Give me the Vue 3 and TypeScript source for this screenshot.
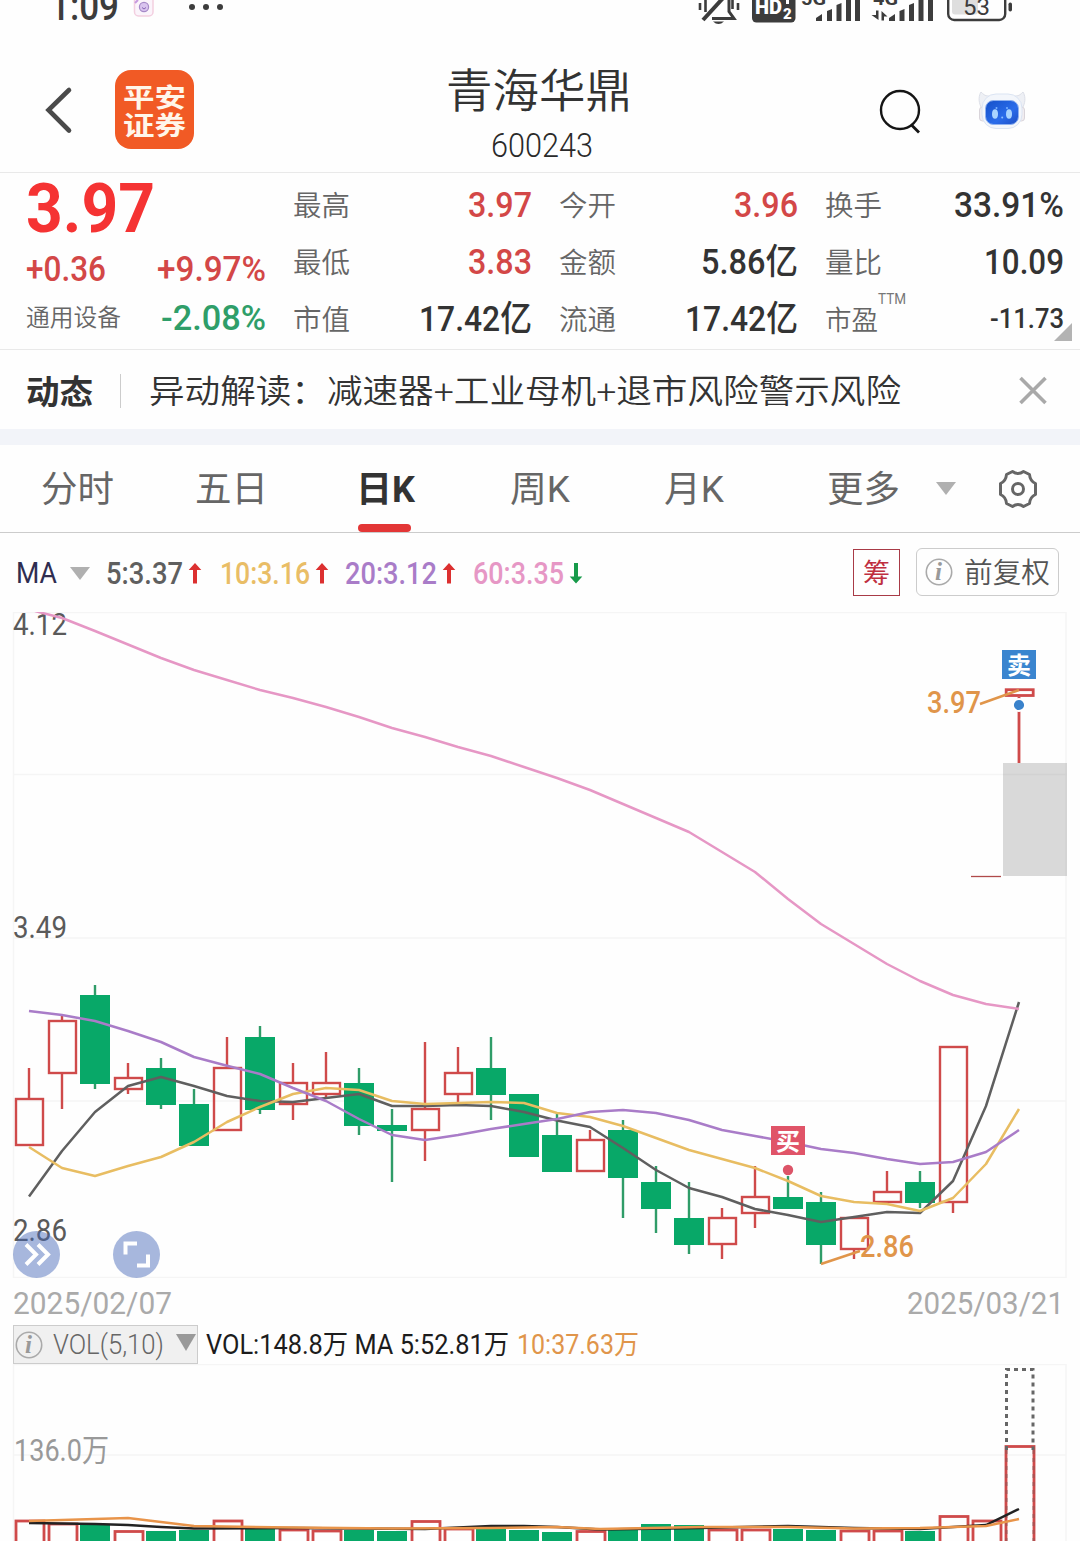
<script setup lang="ts">
import { h } from 'vue'

interface FitProps {
  t: string
  w: number
  s: number
  gap?: boolean
}

// One line of text stretched to a fixed width, vertically centred on its glyphs.
const Fit = (p: FitProps) =>
  h('svg', { class: 'fit', width: p.w, height: p.s }, [
    h('text', {
      x: 0,
      y: p.s * (/[0-9A-Z]/.test(p.t) && !/[日周月]/.test(p.t) ? 0.835 : 0.893),
      'font-size': p.s,
      fill: 'currentColor',
      textLength: p.w,
      lengthAdjust: p.gap ? 'spacing' : 'spacingAndGlyphs',
    }, p.t),
  ])
Fit.props = ['t', 'w', 's', 'gap']

interface Stat { label: string; value: string; w: number; red?: boolean; small?: boolean }
const columns: Stat[][] = [
  [
    { label: '最高', value: '3.97', w: 64, red: true },
    { label: '最低', value: '3.83', w: 64, red: true },
    { label: '市值', value: '17.42亿', w: 113 },
  ],
  [
    { label: '今开', value: '3.96', w: 64, red: true },
    { label: '金额', value: '5.86亿', w: 97 },
    { label: '流通', value: '17.42亿', w: 113 },
  ],
  [
    { label: '换手', value: '33.91%', w: 110 },
    { label: '量比', value: '10.09', w: 80 },
    { label: '市盈', value: '-11.73', w: 74, small: true },
  ],
]

const tabs = [
  { t: '分时', w: 73, box: 154 },
  { t: '五日', w: 73, box: 154 },
  { t: '日K', w: 59, box: 155, on: true },
  { t: '周K', w: 60, box: 154 },
  { t: '月K', w: 60, box: 154 },
]

const averages = [
  { t: '5:3.37', w: 77, color: '#5f5f5f', up: true, gap: 18 },
  { t: '10:3.16', w: 90, color: '#e9bd66', up: true, gap: 16 },
  { t: '20:3.12', w: 92, color: '#a97cc8', up: true, gap: 17 },
  { t: '60:3.35', w: 91, color: '#e697c5', up: false, gap: 0 },
]

// up, body top, body bottom, high, low
type Candle = [boolean, number, number, number, number]
const R = true
const G = false
const candles: Candle[] = [
  [R, 1098, 1146, 1068, 1146], [R, 1020, 1074, 1016, 1109], [G, 995, 1084, 985, 1089],
  [R, 1077, 1090, 1063, 1094], [G, 1068, 1105, 1058, 1109], [G, 1104, 1146, 1089, 1146],
  [R, 1067, 1131, 1037, 1131], [G, 1037, 1110, 1026, 1114], [R, 1082, 1105, 1063, 1120],
  [R, 1082, 1095, 1052, 1097], [G, 1083, 1126, 1068, 1135], [G, 1125, 1131, 1109, 1182],
  [R, 1108, 1131, 1042, 1161], [R, 1072, 1095, 1047, 1102], [G, 1068, 1095, 1037, 1120],
  [G, 1094, 1157, 1094, 1157], [G, 1135, 1172, 1114, 1172], [R, 1139, 1172, 1130, 1172],
  [G, 1130, 1178, 1120, 1218], [G, 1182, 1209, 1166, 1233], [G, 1218, 1245, 1182, 1254],
  [R, 1217, 1245, 1208, 1259], [R, 1196, 1214, 1166, 1228], [G, 1197, 1209, 1176, 1209],
  [G, 1202, 1245, 1192, 1264], [R, 1217, 1250, 1217, 1259], [R, 1191, 1203, 1171, 1203],
  [G, 1182, 1203, 1171, 1208], [R, 1046, 1203, 1046, 1213],
]
const cx = (i: number) => 29 + 33 * i
const line = (ys: number[], from = 0) => ys.map((y, i) => `${cx(i + from)},${y}`).join(' ')

const ma5 = line([1196.5, 1151, 1112, 1086, 1077, 1086, 1096, 1101, 1102, 1098, 1094, 1106, 1106, 1105, 1106, 1112, 1120.5, 1127, 1148, 1170, 1188, 1197, 1209, 1215, 1222, 1217, 1212, 1213, 1181, 1106, 1002])
const ma10 = line([1147, 1168, 1176, 1166, 1157, 1142, 1122, 1107, 1094, 1088, 1090, 1101, 1104, 1103, 1102, 1103, 1113, 1117, 1126, 1138, 1150, 1159, 1168, 1181, 1196, 1202, 1204, 1211, 1198, 1164, 1109])
const ma20 = line([1011, 1015, 1021, 1031, 1042, 1057, 1065.7, 1074, 1088, 1101, 1119, 1135, 1140, 1135, 1129, 1124, 1119, 1112, 1110, 1113, 1120, 1130, 1136, 1142, 1149, 1153, 1159, 1164, 1162, 1152, 1130])
const ma60 = '35,611 ' + line([618, 631, 644.5, 658, 670, 680, 690, 698, 707, 717, 728, 737, 747, 756, 767, 778, 790, 804, 818, 832, 852, 872, 899, 924, 944, 964, 981, 995, 1004, 1009], 1)

const volumes: [boolean, number][] = [
  [R, 1520], [R, 1523], [G, 1525], [R, 1530.5], [G, 1531], [G, 1530], [R, 1520], [G, 1528],
  [R, 1529], [R, 1530], [G, 1530], [G, 1531], [R, 1520.5], [R, 1528], [G, 1528], [G, 1530],
  [G, 1532], [R, 1530.5], [G, 1530], [G, 1524], [G, 1525], [R, 1529], [R, 1529], [G, 1529],
  [G, 1530], [R, 1530], [R, 1530], [G, 1531], [R, 1515.5], [R, 1520], [R, 1445.5],
]
const vol5 = '29,1523 95,1524 128,1525 161,1527 194,1528.5 293,1528 425,1529 491,1526 524,1526 557,1527 600,1529.5 700,1528 788,1526 854,1528 920,1529 953,1527 986,1525 1019,1509'
const vol10 = '29,1521 128,1518 194,1526 293,1527.5 392,1528.5 491,1528 557,1527 600,1529 700,1527 788,1527 854,1528.5 920,1528 953,1527 986,1526 1019,1519'
</script>

<template>
  <main class="page">
    <header class="status">
      <svg class="status-left" width="240" height="30" viewBox="0 0 240 30">
        <text x="50" y="20" font-size="40" font-weight="500" fill="#3c3c3c" textLength="69" lengthAdjust="spacingAndGlyphs">1:09</text>
        <rect x="134.500" y="-8" width="18.500" height="24" rx="4" fill="#fbf4fb" stroke="#f3cfe0" stroke-width="1.500" />
        <circle cx="144" cy="7" r="4.600" fill="#d9c3ee" stroke="#a78ac8" stroke-width="1.200" />
        <path d="M142 7.500q2 3 4 0" fill="none" stroke="#8763b4" />
        <path d="M135 3l3-3" stroke="#c79adf" stroke-width="2" />
        <g fill="#3c3c3c"><circle cx="192" cy="7" r="3" /><circle cx="206" cy="7" r="3" /><circle cx="220" cy="7" r="3" /></g>
      </svg>
      <svg width="390" height="30" viewBox="690 0 390 30" fill="#3c3c3c">
        <g fill="none" stroke="#3c3c3c" stroke-width="3">
          <path d="M700 3v7M705.500 0v12M738 3v7M732.500 0v9" stroke-width="2.600" />
          <path d="M703 20L724 -3" stroke-width="4" />
          <path d="M712 18.500h22l-5-7V-2" />
        </g>
        <path d="M713 21.500h11q-5.500 5-11 0z" />
        <rect x="752" y="-10" width="43.500" height="32.500" rx="4.500" />
        <text x="755" y="13.500" font-size="20" font-weight="900" fill="#fff" textLength="27" lengthAdjust="spacingAndGlyphs">HD</text>
        <text x="783" y="18.500" font-size="15" font-weight="900" fill="#fff">2</text>
        <path d="M786 0h3v4h-3z" fill="#fff" />
        <text x="801" y="5" font-size="18" font-weight="700" textLength="25" lengthAdjust="spacingAndGlyphs">5G</text>
        <path d="M816 21v-3l6-4v7zM827 21V11l5-2v12zM836.500 21V5l5-2v18zM846 21V0h5v21zM855 21V0h5v21z" />
        <text x="873" y="5" font-size="18" font-weight="700" textLength="25" lengthAdjust="spacingAndGlyphs">4G</text>
        <path d="M876 10.500h2.500v9.500l-7-5h4.500zM881.500 20.500v-9.500l6 5.500h-3.500v4z" />
        <path d="M889 21v-3l6-4v7zM899.500 21V11l5-2v12zM909 21V5l5-2v18zM918.500 21V0h5v21zM928 21V0h5v21z" />
        <rect x="952" y="-8" width="26" height="22.500" rx="3" fill="#dedede" />
        <rect x="948.200" y="-12" width="57" height="32" rx="6" fill="none" stroke="#3c3c3c" stroke-width="2.400" />
        <rect x="1008.500" y="2.500" width="3.500" height="9" rx="1.700" />
        <text x="963" y="15" font-size="23" textLength="27" lengthAdjust="spacingAndGlyphs">53</text>
      </svg>
    </header>

    <nav class="titlebar">
      <svg class="back" width="34" height="52" viewBox="42 84 34 52"><path d="M69 90L48.500 110L69 130.500" fill="none" stroke="#4a4a4a" stroke-width="4.600" stroke-linecap="round" /></svg>
      <div class="logo">
        <Fit t="平安" :w="63" :s="26.500" /><Fit t="证券" :w="63" :s="26.500" />
      </div>
      <div class="name">
        <Fit class="stock" t="青海华鼎" :w="186" :s="46" />
        <Fit class="code" t="600243" :w="102" :s="32.500" />
      </div>
      <svg class="search" width="44" height="46" viewBox="878 88 44 46"><circle cx="900" cy="110" r="19" fill="none" stroke="#151515" stroke-width="2.400" /><path d="M911.500 125l7.500 7.500" stroke="#151515" stroke-width="2.800" /></svg>
      <svg class="robot" width="48" height="42" viewBox="978 89 48 42">
        <defs>
          <linearGradient id="face" x1="0" y1="0" x2="1" y2="1"><stop offset="0" stop-color="#1550c8" /><stop offset=".6" stop-color="#2a6cea" /><stop offset="1" stop-color="#1c4ec4" /></linearGradient>
        </defs>
        <path d="M981 107c-3-6-2-12 0-15 2 2 4 4 7 4h28c3 0 5-2 7-4 2 3 3 9 0 15" fill="#eef0f5" stroke="#dcdfe8" />
        <rect x="979.500" y="107" width="7" height="14" rx="3" fill="#f0edf0" stroke="#d9d4da" />
        <rect x="1017.500" y="107" width="7" height="14" rx="3" fill="#f0edf0" stroke="#d9d4da" />
        <rect x="982" y="94" width="40" height="34.500" rx="14" fill="#f3f6fb" stroke="#dbe4f3" />
        <rect x="985.500" y="100.500" width="33" height="24" rx="8" fill="url(#face)" stroke="#8fb2f0" />
        <ellipse cx="995" cy="114" rx="3" ry="4.700" fill="#a9d4ff" /><ellipse cx="1009" cy="114" rx="3" ry="4.700" fill="#a9d4ff" />
        <circle cx="996.500" cy="108" r="1" fill="#7db4ff" /><circle cx="1007" cy="108" r="1" fill="#7db4ff" /><circle cx="1002.200" cy="117.500" r="1" fill="#8fc0ff" />
      </svg>
    </nav>

    <section class="quote">
      <div class="price">
        <Fit class="last" t="3.97" :w="129" :s="69" />
        <div class="pair red change"><Fit t="+0.36" :w="80" :s="35" /><Fit t="+9.97%" :w="109" :s="35" /></div>
        <div class="pair"><Fit class="sector" t="通用设备" :w="95" :s="24" /><Fit class="green" t="-2.08%" :w="105" :s="35" /></div>
      </div>
      <div v-for="(col, c) in columns" :key="c" class="col">
        <div v-for="s in col" :key="s.label" class="stat">
          <Fit class="label" :t="s.label" :w="s.small ? 53 : 57" :s="s.small ? 27 : 28.500" />
          <Fit v-if="s.small" class="ttm" t="TTM" :w="28" :s="15.500" />
          <Fit class="val" :class="{ red: s.red }" :t="s.value" :w="s.w" :s="s.small ? 28 : 35" />
        </div>
      </div>
      <i class="corner"></i>
    </section>

    <section class="news">
      <Fit class="news-tag" t="动态" :w="67" :s="33.500" />
      <i class="bar"></i>
      <Fit class="news-text" t="异动解读：减速器+工业母机+退市风险警示风险" :w="752" :s="33" gap />
      <svg class="close" width="28" height="30" viewBox="0 0 28 30"><path d="M1.500 2l25 25M26.500 2l-25 25" stroke="#a9a9a9" stroke-width="3.600" /></svg>
    </section>

    <section class="tabs">
      <div v-for="tab in tabs" :key="tab.t" class="tab" :class="{ on: tab.on }" :style="{ width: tab.box + 'px' }">
        <Fit :t="tab.t" :w="tab.w" :s="36.500" />
      </div>
      <Fit class="more" t="更多" :w="73" :s="36.500" />
      <i class="tri"></i>
      <svg class="gear" width="40" height="40" viewBox="-20 -20 40 40" fill="none" stroke="#666" stroke-width="3" stroke-linejoin="round">
        <path d="M-5.500-17.500Q0-13.500 5.500-17.500L11.500-14.500Q12-8 17.500-5.500V5.500Q12 8 11.500 14.500L5.500 17.500Q0 13.500-5.500 17.500L-11.500 14.500Q-12 8-17.500 5.500V-5.500Q-12-8-11.500-14.500Z" />
        <circle r="5.500" />
      </svg>
    </section>

    <section class="averages">
      <Fit class="ma" t="MA" :w="41" :s="29" />
      <i class="tri ma-tri"></i>
      <div v-for="a in averages" :key="a.t" class="avg" :style="{ color: a.color, marginRight: a.gap + 'px' }">
        <Fit :t="a.t" :w="a.w" :s="31" />
        <svg width="14" height="22" viewBox="0 0 14 22">
          <path v-if="a.up" d="M7 1L13.300 8H9V21.500H5V8H.7z" fill="#dc3030" />
          <path v-else d="M7 21.500L13.300 14.500H9V1H5V14.500H.7z" fill="#179a4a" />
        </svg>
      </div>
      <span class="chip"><Fit t="筹" :w="27" :s="27" /></span>
      <span class="adjust">
        <svg width="28" height="28" viewBox="-14 -14 28 28"><circle r="12.700" fill="none" stroke="#aaa" stroke-width="1.600" /><text class="info" y="8" x="-.5" text-anchor="middle">i</text></svg>
        <Fit t="前复权" :w="86" :s="28.500" />
      </span>
    </section>

    <svg class="chart" width="1080" height="666" viewBox="0 612 1080 666">
      <g class="grid"><path d="M13.500 1277.500V612.500H1066V1277.500zM14 774.500H1066M14 938H1066M14 1101H1066" /></g>
      <g class="axis" font-size="31">
        <text x="13" y="635" textLength="54" lengthAdjust="spacingAndGlyphs">4.12</text>
        <text x="13" y="938" textLength="54" lengthAdjust="spacingAndGlyphs">3.49</text>
        <text x="13" y="1241" textLength="54" lengthAdjust="spacingAndGlyphs">2.86</text>
      </g>
      <g v-for="(k, i) in candles" :key="i" :class="k[0] ? 'up' : 'down'">
        <path :d="`M${cx(i)} ${k[3]}V${k[1]}M${cx(i)} ${k[2]}V${k[4]}`" />
        <rect v-if="k[0]" :x="cx(i) - 13" :y="k[1] + 1" width="27" :height="k[2] - k[1] - 2" />
        <rect v-else :x="cx(i) - 15" :y="k[1]" width="30" :height="k[2] - k[1]" />
      </g>
      <path d="M971 876.500h30" stroke="#b04a4a" stroke-width="1.300" />
      <g class="up last-candle"><rect x="1006.200" y="689.700" width="27" height="5.800" /><path d="M1019 697v66" /></g>
      <g class="curves">
        <polyline :points="ma5" stroke="#5f5f5f" />
        <polyline :points="ma10" stroke="#e8bd62" />
        <polyline :points="ma20" stroke="#a97cc8" />
        <polyline :points="ma60" stroke="#e697c5" />
        <path d="M980 704L1019 690M821 1264L860 1251" stroke="#e0954a" />
      </g>
      <rect x="1003" y="763" width="64" height="113" fill="#d9d9d9" />
      <path d="M1003 774.500h64M1066 763v113" stroke="#d2d2d2" stroke-width="1.500" />
      <circle cx="1019" cy="705" r="6" fill="#3a82cb" stroke="#fff" stroke-width="1.800" />
      <circle cx="788" cy="1170" r="5.200" fill="#dc5468" />
      <g fill="#e0954a" font-size="30.500" font-weight="500">
        <text x="927" y="713" textLength="54" lengthAdjust="spacingAndGlyphs">3.97</text>
        <text x="860" y="1257" textLength="54" lengthAdjust="spacingAndGlyphs">2.86</text>
      </g>
      <rect x="1002" y="650" width="34" height="29" fill="#3a85cf" />
      <text class="mark" x="1019" y="673.500">卖</text>
      <rect x="771" y="1126" width="34" height="29" fill="#e05468" />
      <text class="mark" x="788" y="1149.500">买</text>
      <g fill="rgba(70,105,185,.47)"><circle cx="36.500" cy="1254.500" r="23.500" /><circle cx="136.500" cy="1254.500" r="23.500" /></g>
      <path d="M26 1244.500L36 1254.500L26 1264.500M38 1244.500L48 1254.500L38 1264.500M137 1243.500H125.500V1254.500M137 1265.500H148V1254.500" fill="none" stroke="#fff" stroke-width="4" />
    </svg>

    <div class="dates"><Fit t="2025/02/07" :w="159" :s="31.500" /><Fit t="2025/03/21" :w="157" :s="31.500" /></div>

    <section class="volbar">
      <div class="volpick">
        <svg width="28" height="28" viewBox="-14 -14 28 28"><circle r="12.700" fill="none" stroke="#aaa" stroke-width="1.600" /><text class="info" y="8" x="-.5" text-anchor="middle">i</text></svg>
        <Fit class="volname" t="VOL(5,10)" :w="111" :s="27.500" />
        <i class="tri vol-tri"></i>
      </div>
      <Fit class="voltext" t="VOL:148.8万 MA 5:52.81万" :w="303" :s="27" />
      <Fit class="voltext orange" t="10:37.63万" :w="122" :s="27" />
    </section>

    <svg class="chart" width="1080" height="177" viewBox="0 1364 1080 177">
      <g class="grid"><path d="M13.500 1545V1364.500H1066V1545M14 1455H1066" /></g>
      <text x="14" y="1461" font-size="31" fill="#999" textLength="95" lengthAdjust="spacingAndGlyphs">136.0万</text>
      <g v-for="(v, i) in volumes" :key="i" :class="v[0] ? 'up' : 'down'">
        <rect v-if="v[0]" :x="cx(i) - 13" :y="v[1] + 1" width="28" height="110" class="vol" />
        <rect v-else :x="cx(i) - 15" :y="v[1]" width="30" height="110" />
      </g>
      <path d="M1006.500 1450V1369.500H1033V1450" fill="none" stroke="#666" stroke-width="3" stroke-dasharray="4 4" />
      <path d="M1006.500 1450V1545M1033.500 1450V1545" fill="none" stroke="#8a5a5a" stroke-width="2.400" stroke-dasharray="4 4" stroke-opacity=".5" />
      <g class="curves"><polyline :points="vol5" stroke="#222" /><polyline :points="vol10" stroke="#e8944a" /></g>
    </svg>
  </main>
</template>

<style>
body { background: #fefefe; }
</style>

<style scoped>
.page { width: 1080px; height: 1541px; overflow: hidden; background: #fefefe; font-family: Roboto, "Noto Sans CJK SC", sans-serif; color: #333; }
.fit { display: block; flex: none; overflow: visible; }
svg { display: block; flex: none; }
.status { display: flex; justify-content: space-between; height: 30px; overflow: hidden; }
.titlebar { display: flex; height: 143px; box-sizing: border-box; border-bottom: 1px solid #e9e9e9; align-items: flex-start; }
.back { margin: 54px 0 0 42px; }
.logo { box-sizing: border-box; width: 79px; height: 79px; margin: 40px 0 0 39px; padding: 13px 8px 0; border-radius: 16px; background: #f15a25; color: #fff6ea; font-weight: 700; display: flex; flex-direction: column; gap: 1px; }
.name { display: flex; flex-direction: column; align-items: center; margin-left: 251px; width: 188px; }
.stock { margin-top: 35.500px; font-weight: 350; }
.code { margin: 18px 0 0 6px; font-weight: 350; color: #2a2a2a; }
.search { margin: 58px 0 0 245px; }
.robot { margin: 59px 0 0 56px; }
.quote { position: relative; display: flex; height: 177px; box-sizing: border-box; border-bottom: 1px solid #e9e9e9; font-weight: 500; padding-right: 15px; }
.price { width: 240px; margin: 1px 27px 0 26px; }
.last { color: #f53333; font-weight: 700; margin-bottom: 9px; }
.pair { display: flex; justify-content: space-between; align-items: center; height: 35px; }
.pair + .pair { margin-top: 14px; }
.red { color: #d34747; }
.green { color: #2f9e69; }
.sector { color: #666; font-weight: 350; margin-bottom: 3px; }
.col { width: 239px; margin-right: 27px; padding-top: 3.500px; }
.col:nth-of-type(4) { margin-right: 0; }
.stat { display: flex; align-items: center; height: 57px; }
.label { color: #666; font-weight: 350; }
.ttm { color: #777; font-weight: 400; margin-top: -41px; }
.val { margin-left: auto; }
.corner { position: absolute; right: 8px; bottom: 8px; border-style: solid; border-width: 0 0 18px 18px; border-color: transparent transparent #b3b3b3; }
.news { display: flex; align-items: center; height: 79px; padding: 2px 0 0 26px; box-sizing: border-box; }
.news-tag { font-weight: 700; }
.bar { width: 1px; height: 34px; background: #ccc; margin: 0 28px 0 27px; }
.news-text { font-weight: 350; }
.close { margin-left: 118px; }
.tabs { border-top: 16px solid #f2f4f9; height: 87px; border-bottom: 1px solid #ccc; display: flex; align-items: stretch; color: #666; font-weight: 400; }
.tab { display: flex; justify-content: center; align-items: center; position: relative; padding-bottom: 2px; box-sizing: border-box; }
.tab.on { color: #333; font-weight: 700; }
.tab.on::after { content: ""; position: absolute; bottom: 0; left: 50px; width: 53px; height: 8px; border-radius: 4px; background: #e33636; }
.more { margin: 24px 0 0 56px; }
.tri { width: 0; height: 0; border: 10px solid transparent; border-bottom: 0; border-top: 13px solid #b0b0b0; flex: none; }
.tabs .tri { margin: 37px 0 0 36px; }
.gear { margin: 23.500px 0 0 42px; }
.averages { display: flex; align-items: center; height: 78px; padding: 2px 0 0 16px; box-sizing: border-box; }
.ma { color: #2f2d50; font-weight: 400; }
.ma-tri { margin: 0 16px 0 13px; }
.avg { display: flex; align-items: center; gap: 5px; font-weight: 500; }
.chip { box-sizing: border-box; width: 47px; height: 47px; border: 1.500px solid #a83a46; color: #bf2f40; display: flex; align-items: center; justify-content: center; margin: 0 16px 2px auto; }
.adjust { box-sizing: border-box; width: 143px; height: 48px; border: 1.500px solid #ccc; border-radius: 6px; display: flex; align-items: center; justify-content: space-between; padding: 0 8px 0 8px; margin: 0 21px 2px 0; color: #555; font-weight: 350; }
.info { font: italic 700 25px "Liberation Serif", serif; fill: #999; }
.chart { overflow: hidden; }
.averages + .chart { margin-top: 1px; }
.grid path { fill: none; stroke: #f5f5f5; stroke-width: 1.500; }
.axis { fill: #5a5a5a; }
.up { fill: none; stroke: #cf4a4a; stroke-width: 2.400; }
.last-candle { stroke-width: 2.800; }
.up .vol { stroke-width: 2.800; }
.down { fill: #08a868; stroke: none; }
.down path { stroke: #2f9c68; stroke-width: 2.400; }
.curves { fill: none; stroke-width: 2.500; stroke-linejoin: round; }
.mark { fill: #fff; font-size: 24px; font-weight: 700; text-anchor: middle; }
.dates { display: flex; justify-content: space-between; align-items: center; height: 47px; padding: 4px 16px 0 13px; box-sizing: border-box; color: #aaa; }
.volbar { display: flex; align-items: center; height: 39px; padding-left: 13px; }
.volpick { box-sizing: border-box; width: 185px; height: 39px; border: 1px solid #ccc; background: #f0f0f0; display: flex; align-items: center; padding-left: 1px; margin-right: 8px; }
.volname { margin: 0 12px 0 10px; color: #666; font-weight: 350; }
.vol-tri { border-top: 17px solid #999; margin-bottom: 4px; }
.voltext { color: #1c1c1c; font-weight: 400; margin-right: 8px; }
.voltext.orange { color: #e0954a; }
</style>
